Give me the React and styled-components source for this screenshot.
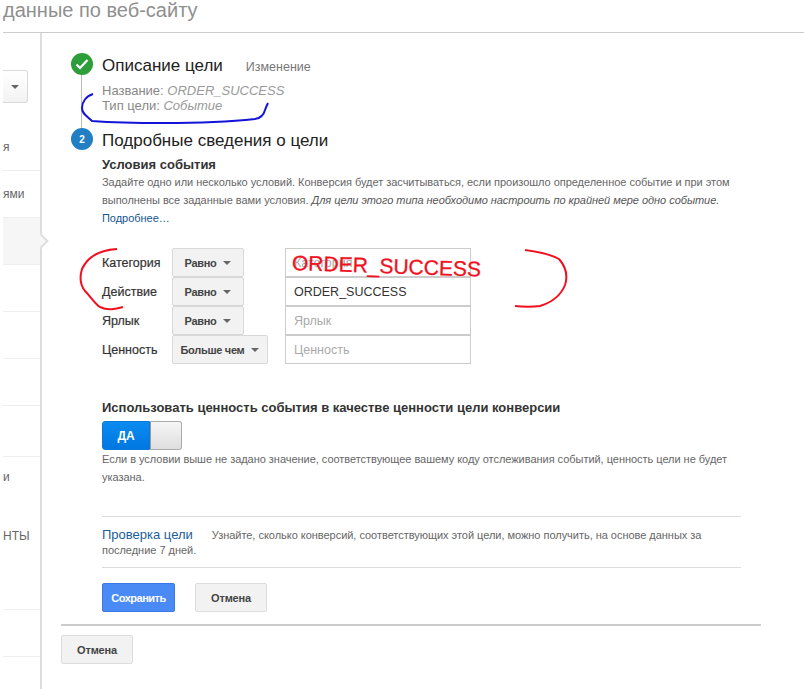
import React from 'react';
import styled, { createGlobalStyle } from 'styled-components';

const Global = createGlobalStyle`
html, body {
  margin: 0;
  padding: 0;
  background: #fff;
}
body {
  font-family: "Liberation Sans", Arial, sans-serif;
  color: #333;
}
`;

const Page = styled.div`
position: relative;
width: 804px;
height: 689px;
overflow: hidden;
padding-left: 3px;
box-sizing: border-box;
`;

const Header = styled.div`
height: 32px;
border-bottom: 1px solid #ccc;
font-size: 20px;
line-height: 20px;
color: #8f8f8f;
`;

const Body = styled.div`
display: flex;
`;

const Sidebar = styled.div`
position: relative;
width: 37px;
height: 656px;
flex: none;
border-right: 2px solid #ddd;
padding-top: 37px;
box-sizing: content-box;
`;

const SideDropdown = styled.div`
width: 25px;
height: 33px;
box-sizing: border-box;
border: 1px solid #d9d9d9;
border-left: none;
border-radius: 0 3px 3px 0;
background: linear-gradient(#fff, #f3f3f3);
display: flex;
align-items: center;
justify-content: center;
margin-bottom: 21px;
`;

const Caret = styled.span`
display: inline-block;
width: 0;
height: 0;
border-left: 4px solid transparent;
border-right: 4px solid transparent;
border-top: 4px solid ${p => p.$color || '#666'};
`;

const SideItem = styled.div`
position: relative;
height: ${p => p.$h}px;
box-sizing: border-box;
border-bottom: ${p => (p.$plain ? 'none' : '1px solid #eee')};
background: ${p => (p.$active ? '#f6f6f6' : 'transparent')};
font-size: 12px;
color: #666;
display: flex;
align-items: center;
white-space: nowrap;
`;

const SideNotch = styled.span`
position: absolute;
right: -7px;
top: 17px;
width: 12px;
height: 12px;
background: #f6f6f6;
border-top: 2px solid #ddd;
border-right: 2px solid #ddd;
box-sizing: border-box;
transform: rotate(45deg) scale(0.9);
`;

const Main = styled.div`
flex: 1;
padding: 20px 0 0 19px;
`;

const Form = styled.div`
width: 700px;
`;

const StepRow = styled.div`
display: flex;
align-items: center;
height: 22px;
`;

const StepBadge = styled.div`
width: 22px;
height: 22px;
border-radius: 50%;
flex: none;
background: ${p => p.$bg};
color: #fff;
font-size: 10px;
font-weight: bold;
display: flex;
align-items: center;
justify-content: center;
margin: 0 9px 0 10px;
`;

const StepTitle = styled.div`
font-size: 17px;
line-height: 22px;
padding-top: 4px;
color: #222;
white-space: nowrap;
`;

const EditLink = styled.span`
font-size: 12.5px;
color: #777;
margin: 5px 0 0 23px;
`;

const Summary = styled.div`
position: relative;
margin: 6px 0 5px 41px;
padding: 2px 0 3px;
font-size: 13px;
line-height: 15px;
color: #888;
height: 42px;
box-sizing: border-box;
`;

const StepLine = styled.span`
position: absolute;
left: -21px;
top: -6px;
bottom: -5px;
width: 1px;
background: #bbb;
`;

const Em = styled.em`
color: #999;
`;

const Details = styled.div`
margin-left: 41px;
`;

const SectionTitle = styled.div`
font-size: 13px;
font-weight: bold;
line-height: 16px;
color: #333;
white-space: nowrap;
`;

const ConditionsTitle = styled(SectionTitle)`
margin-top: 7px;
`;

const Help = styled.div`
font-size: 11px;
line-height: 18px;
letter-spacing: -0.035px;
color: #666;
white-space: nowrap;
em { color: #555; }
a { color: #15568f; text-decoration: none; }
`;

const Conditions = styled.div`
margin-top: 21px;
`;

const CondRow = styled.div`
display: grid;
grid-template-columns: 70px 113px 186px;
height: 29px;
align-items: stretch;
`;

const CondLabel = styled.div`
font-size: 12.5px;
color: #333;
display: flex;
align-items: center;
-webkit-text-stroke: 0.2px #333;
`;

const Select = styled.div`
width: ${p => p.$w}px;
box-sizing: border-box;
border: 1px solid #d8d8d8;
border-radius: 2px;
background: #f2f2f2;
font-size: 11px;
font-weight: bold;
letter-spacing: -0.3px;
color: #444;
display: flex;
align-items: center;
justify-content: center;
gap: 7px;
`;

const Input = styled.input`
width: 186px;
box-sizing: border-box;
border: 1px solid #ccc;
outline: none;
padding: 0 8px;
font-family: inherit;
font-size: 12.5px;
color: #333;
&::placeholder { color: #aaa; opacity: 1; }
`;

const ToggleTitle = styled(SectionTitle)`
margin-top: 36px;
`;

const Toggle = styled.div`
display: flex;
width: 80px;
height: 29px;
margin-top: 5px;
box-sizing: border-box;
`;

const ToggleOn = styled.div`
width: 48px;
background: linear-gradient(#0a8bf0, #0077e0);
border: 1px solid #0a7ad8;
border-radius: 3px 0 0 3px;
box-sizing: border-box;
color: #fff;
font-size: 12px;
font-weight: bold;
display: flex;
align-items: center;
justify-content: center;
`;

const ToggleOff = styled.div`
flex: 1;
background: linear-gradient(#f6f6f6, #dedede);
border: 1px solid #aaa;
border-left: 1px solid #999;
border-radius: 0 3px 3px 0;
box-sizing: border-box;
`;

const CheckBox = styled.div`
margin-top: 30px;
width: 639px;
height: 52px;
box-sizing: border-box;
border-top: 1px solid #ddd;
border-bottom: 1px solid #ddd;
padding-top: 10px;
font-size: 11px;
line-height: 15px;
letter-spacing: -0.03px;
color: #666;
white-space: nowrap;
`;

const CheckTitle = styled.span`
font-size: 13px;
letter-spacing: 0;
color: #1a5e9a;
margin-right: 19px;
`;

const Actions = styled.div`
display: flex;
gap: 20px;
margin-top: 15px;
`;

const Button = styled.div`
width: ${p => p.$w}px;
height: 29px;
box-sizing: border-box;
border-radius: 2px;
border: 1px solid ${p => (p.$primary ? '#3b78e7' : '#ddd')};
background: ${p => (p.$primary ? '#4a8af4' : '#f2f2f2')};
color: ${p => (p.$primary ? '#fff' : '#444')};
font-size: 11px;
font-weight: bold;
letter-spacing: ${p => (p.$primary ? '-0.5px' : '-0.2px')};
display: flex;
align-items: center;
justify-content: center;
`;

const Footer = styled.div`
width: 700px;
margin-top: 12px;
border-top: 2px solid #ccc;
padding-top: 9px;
`;

const Scribble = styled.svg`
position: absolute;
left: 0;
top: 0;
pointer-events: none;
`;

const ScrawlText = styled.div`
position: absolute;
left: 292px;
top: 250px;
font-family: "Liberation Sans", sans-serif;
font-size: 21px;
line-height: 26px;
color: #f01020;
-webkit-text-stroke: 0.3px #f01020;
white-space: nowrap;
transform: rotate(2deg);
transform-origin: left center;
pointer-events: none;
`;

const conditions = [
  { label: 'Категория', op: 'Равно', w: 72, placeholder: 'Категория' },
  { label: 'Действие', op: 'Равно', w: 72, value: 'ORDER_SUCCESS' },
  { label: 'Ярлык', op: 'Равно', w: 72, placeholder: 'Ярлык' },
  { label: 'Ценность', op: 'Больше чем', w: 96, placeholder: 'Ценность' },
];

const sideItems = [
  { h: 47, text: 'я' },
  { h: 47, text: 'ями' },
  { h: 47, active: true },
  { h: 47 },
  { h: 47 },
  { h: 47 },
  { h: 51 },
  { h: 40, text: 'и', plain: true },
  { h: 78, text: 'НТЫ', plain: true },
  { h: 35 },
  { h: 47 },
];

const App = () => {
  return (
    <>
      <Global />
      <Page>
        <Header>данные по веб-сайту</Header>
        <Body>
          <Sidebar>
            <SideDropdown><Caret /></SideDropdown>
            {sideItems.map((item, i) => (
              <SideItem key={i} $h={item.h} $active={item.active} $plain={item.plain}>
                {item.text}
                {item.active && <SideNotch />}
              </SideItem>
            ))}
          </Sidebar>
          <Main>
            <Form>
              <StepRow>
                <StepBadge $bg="#2e9e3a">
                  <svg width="14" height="12" viewBox="0 0 14 12">
                    <path d="M1.5 6.5 L5 10 L12.5 2" fill="none" stroke="#fff" strokeWidth="2.2" />
                  </svg>
                </StepBadge>
                <StepTitle>Описание цели</StepTitle>
                <EditLink>Изменение</EditLink>
              </StepRow>
              <Summary>
                <StepLine />
                Название: <Em>ORDER_SUCCESS</Em><br />
                Тип цели: <Em>Событие</Em>
              </Summary>
              <StepRow>
                <StepBadge $bg="#227fc4">2</StepBadge>
                <StepTitle>Подробные сведения о цели</StepTitle>
              </StepRow>
              <Details>
                <ConditionsTitle>Условия события</ConditionsTitle>
                <Help>
                  Задайте одно или несколько условий. Конверсия будет засчитываться, если произошло определенное событие и при этом<br />
                  выполнены все заданные вами условия. <em>Для цели этого типа необходимо настроить по крайней мере одно событие.</em><br />
                  <a>Подробнее…</a>
                </Help>
                <Conditions>
                  {conditions.map(c => (
                    <CondRow key={c.label}>
                      <CondLabel>{c.label}</CondLabel>
                      <Select $w={c.w}>{c.op} <Caret /></Select>
                      <Input placeholder={c.placeholder} defaultValue={c.value} />
                    </CondRow>
                  ))}
                </Conditions>
                <ToggleTitle>Использовать ценность события в качестве ценности цели конверсии</ToggleTitle>
                <Toggle>
                  <ToggleOn>ДА</ToggleOn>
                  <ToggleOff />
                </Toggle>
                <Help>
                  Если в условии выше не задано значение, соответствующее вашему коду отслеживания событий, ценность цели не будет<br />
                  указана.
                </Help>
                <CheckBox>
                  <CheckTitle>Проверка цели</CheckTitle>
                  Узнайте, сколько конверсий, соответствующих этой цели, можно получить, на основе данных за<br />
                  последние 7 дней.
                </CheckBox>
                <Actions>
                  <Button $w={73} $primary>Сохранить</Button>
                  <Button $w={72}>Отмена</Button>
                </Actions>
              </Details>
            </Form>
            <Footer>
              <Button $w={72}>Отмена</Button>
            </Footer>
          </Main>
        </Body>
        <ScrawlText>ORDER_SUCCESS</ScrawlText>
        <Scribble width="804" height="689" viewBox="0 0 804 689">
          <path d="M93 94 C86 96 82 102 82 108 C82 114 87 116 92 121 C120 123 200 125 255 119 C262 118 264 114 265 110 C266 107 267 105 268 103" fill="none" stroke="#1414d8" strokeWidth="2" />
          <path d="M117 249 C100 250 88 256 82 269 C79 279 81 286 85 291 C91 297 95 304 100 307 C108 311 116 309 123 307" fill="none" stroke="#f01020" strokeWidth="2" />
          <path d="M525 250 C540 252 552 255 559 259 C566 267 568 276 565 285 C561 295 553 302 540 306 C532 307 524 307 515 306" fill="none" stroke="#f01020" strokeWidth="2" />
        </Scribble>
      </Page>
    </>
  );
};

export default App;
